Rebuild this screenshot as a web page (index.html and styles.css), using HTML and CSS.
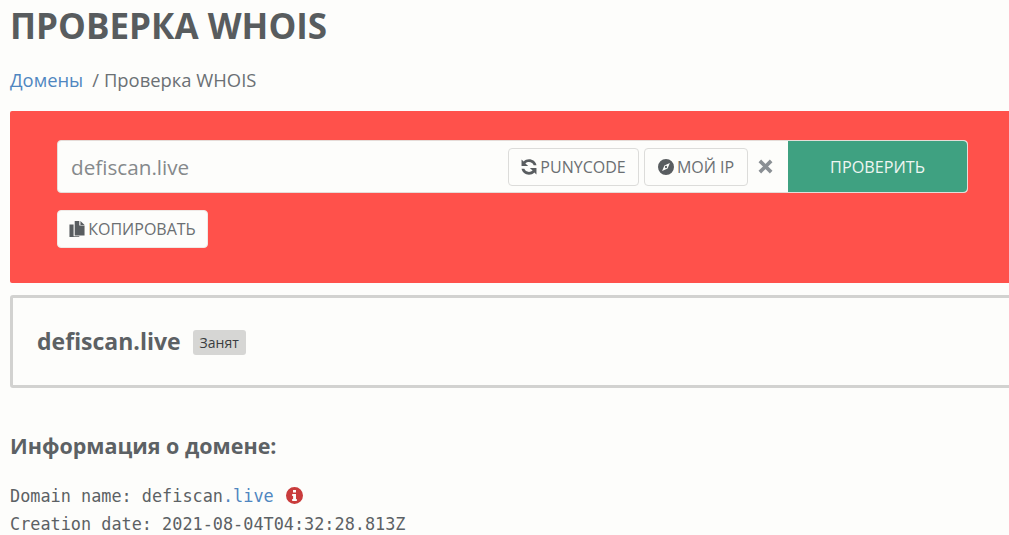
FILE: index.html
```html
<!DOCTYPE html>
<html lang="en">
<head>
    <meta charset="UTF-8">
    <title>Проверка WHOIS</title>
    <link rel="stylesheet" href="styles.css">
</head>
<body>
    <div class="page">
        <h1 class="page-title">Проверка WHOIS</h1>
        <nav class="breadcrumb"><a href="#">Домены</a><span class="crumb-sep">/</span><span>Проверка WHOIS</span></nav>

        <section class="search-panel">
            <form class="search-form">
                <input class="search-input" type="text" value="defiscan.live">
                <div class="search-tools">
                    <button type="button" class="tool-btn tool-puny">
                        <svg class="icon" viewBox="2 2 12 12"><path d="M13.6 6.6C13 3.9 10.8 2.2 8 2.2c-1.6 0-3 .6-4 1.7L2.4 2.3v5h5L5.3 5.3c.7-.6 1.7-1 2.7-1 1.7 0 3 1 3.5 2.3zM2.4 9.4c.6 2.7 2.8 4.4 5.6 4.4 1.6 0 3-.6 4-1.7l1.6 1.6v-5h-5l2.1 2c-.7.6-1.7 1-2.7 1-1.7 0-3-1-3.5-2.3z"/></svg>
                        PUNYCODE
                    </button>
                    <button type="button" class="tool-btn tool-ip">
                        <svg class="icon" viewBox="1 1 14 14"><path fill-rule="evenodd" d="M8 1a7 7 0 1 1 0 14A7 7 0 0 1 8 1zm3.4 3.6L6.6 6.6l-2 4.8 4.8-2zM8 7a1 1 0 1 1 0 2 1 1 0 0 1 0-2z"/></svg>
                        МОЙ IP
                    </button>
                    <button type="button" class="clear-btn">
                        <svg class="icon-x" viewBox="0 0 12 12"><path d="M2 2l8 8M10 2l-8 8"/></svg>
                    </button>
                </div>
                <button type="submit" class="submit-btn">ПРОВЕРИТЬ</button>
            </form>
            <button type="button" class="tool-btn copy-btn">
                <svg class="icon" viewBox="1 1 14 14"><path d="M6 1h4v4h4.6v8.6H6z"/><path d="M11 1l3.6 3.6H11zM1.4 4H5v10.4h5V15H1.4z"/></svg>
                КОПИРОВАТЬ
            </button>
        </section>

        <section class="status-card">
            <span class="status-domain">defiscan.live</span>
            <span class="status-badge">Занят</span>
        </section>

        <h2 class="info-title">Информация о домене:</h2>
        <pre class="whois">Domain name: defiscan<a href="#">.live</a> <svg class="icon-info" viewBox="0 0 16 16"><path fill-rule="evenodd" d="M8 0a8 8 0 1 1 0 16A8 8 0 0 1 8 0zM6.6 2.8v2.4h2.8V2.8zM5.8 6.6v1.8h.9v3H5.8v1.8h4.4v-1.8h-.8V6.6z"/></svg>
Creation date: 2021-08-04T04:32:28.813Z</pre>
    </div>
</body>
</html>
```

FILE: styles.css
```css
* {
    box-sizing: border-box;
    margin: 0;
    padding: 0;
}

html, body {
    height: 535px;
    overflow: hidden;
}

body {
    background: #fdfdfb;
    color: #5c6164;
    font-family: "Open Sans", sans-serif;
}

.page {
    width: 1030px;
    padding: 5px 0 0 10px;
}

.page-title {
    font-size: 35px;
    line-height: 42px;
    font-weight: 700;
    text-transform: uppercase;
    color: #585c5e;
}

.breadcrumb {
    margin-top: 20px;
    font-size: 18.4px;
    line-height: 26px;
    color: #6b7074;
}

.breadcrumb a {
    color: #4f86c0;
    text-decoration: none;
}

.crumb-sep {
    margin: 0 5px 0 9px;
}

/* red search block */
.search-panel {
    margin-top: 18px;
    height: 172px;
    padding: 29px 42px 0 47px;
    background: #ff514b;
    border-radius: 2px 0 0 2px;
}

.search-form {
    display: flex;
    align-items: stretch;
    width: 911px;
    height: 53px;
    background: #fdfdfb;
    border: 1px solid #e6dcd8;
    border-radius: 4px;
}

.search-input {
    flex: 1;
    min-width: 0;
    padding-left: 13px;
    border: none;
    outline: none;
    background: transparent;
    font-family: inherit;
    font-size: 20.7px;
    color: #85898b;
}

.search-tools {
    display: flex;
    align-items: center;
    gap: 5px;
}

.tool-btn {
    display: inline-flex;
    align-items: center;
    justify-content: center;
    gap: 3px;
    height: 38px;
    border: 1px solid #dcdcda;
    border-radius: 4px;
    background: #fdfdfb;
    font-family: inherit;
    font-size: 16px;
    color: #6b6f72;
}

.tool-puny {
    width: 131px;
}

.tool-ip {
    width: 104px;
}

.icon {
    width: 16px;
    height: 16px;
    fill: #595d60;
}

.clear-btn {
    display: flex;
    align-items: center;
    justify-content: center;
    width: 35px;
    height: 38px;
    padding-right: 10px;
    border: none;
    background: none;
}

.icon-x {
    width: 17px;
    height: 17px;
    fill: none;
    stroke: #8a8f94;
    stroke-width: 2.6;
}

.submit-btn {
    width: 179px;
    border: none;
    border-radius: 0 4px 4px 0;
    background: #3fa181;
    color: #eef6f2;
    font-family: inherit;
    font-size: 16.2px;
}

.copy-btn {
    margin-top: 17px;
    width: 151px;
    border-color: #efe9e6;
}

/* result card */
.status-card {
    display: flex;
    align-items: center;
    margin-top: 12px;
    height: 93px;
    padding: 0 0 2px 24px;
    border: 3px solid #d2d2d0;
    border-radius: 3px 0 0 3px;
}

.status-domain {
    font-size: 23px;
    font-weight: 700;
    color: #5c6164;
}

.status-badge {
    margin: 4px 0 0 12px;
    padding: 0 7px;
    height: 25px;
    line-height: 26px;
    font-size: 14px;
    color: #3a3d40;
    background: #d6d6d4;
    border-radius: 3px;
}

.info-title {
    margin-top: 42px;
    font-size: 21.5px;
    line-height: 32px;
    font-weight: 700;
    color: #5c6164;
}

.whois {
    margin-top: 20px;
    font-family: "DejaVu Sans Mono", monospace;
    font-size: 16.85px;
    line-height: 28px;
    color: #5c6164;
}

.whois a {
    color: #4f86c0;
    text-decoration: none;
}

.icon-info {
    width: 17px;
    height: 17px;
    margin-left: 2px;
    vertical-align: -2px;
    fill: #c93c3c;
}
```
